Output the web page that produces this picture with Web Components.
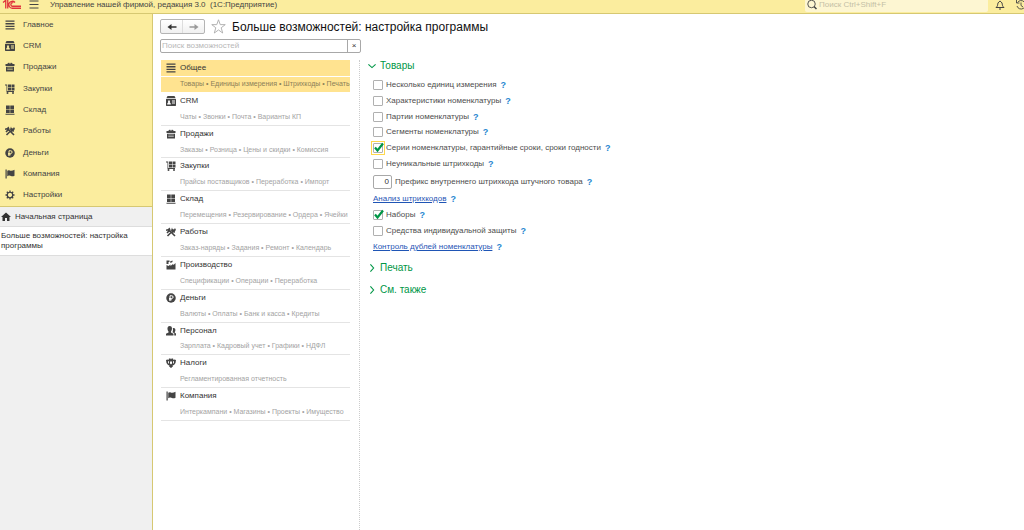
<!DOCTYPE html>
<html lang="ru">
<head>
<meta charset="utf-8">
<title>Управление нашей фирмой</title>
<style>
  html, body { margin: 0; height: 100%; overflow: hidden; }
  body { font: 8px/10px "Liberation Sans", Arial, sans-serif; color: #444; background: #fff; }
</style>
</head>
<body>
<app-shell></app-shell>
<script>
const ICONS = {
  bars: '<path d="M1 1h18v2.600H1zM1 6.200h18v2.600H1zM1 11.400h18V14H1zM1 16.600h18v2.600H1z"/>',
  crm: '<path d="M3 0h14l2 4H1z"/><path d="M1 5.500h18l1 1V19l-1 1H1l-1-1V6.500zM6 8.500c-2 0-2.500 2-1.500 4L2.500 15v2h7v-2l-2-2.500c1-2 .5-4-1.500-4zM12 9v2h6V9zM12 13v2h6v-2z" fill-rule="evenodd"/>',
  basket: '<path d="M4 4l4-3 2 3 2-3 4 3h3v4H1V4zM2 9.500h16V19H2zM4.500 11.500v1h11v-1zM4.500 15v1h11v-1z" fill-rule="evenodd"/>',
  cart: '<path d="M0 1h4.500v13H18v2H3V3H0zM6 1h6v5.500H6zM13 1h6v5.500h-6zM6 7.500h6V13H6zM13 7.500h6V13h-6z"/><circle cx="5" cy="18" r="2"/><circle cx="16" cy="18" r="2"/>',
  store: '<path d="M2 1h7.500v7H2zM10.500 1H18v7h-7.500zM2 9h7.500v7H2zM10.500 9H18v7h-7.500zM1 17.500h18v2H1z"/>',
  tools: '<path d="m3 18 8-8M6 6l12 12M2 12l4-4M12 9l6 1" fill="none" stroke="currentColor" stroke-width="3.200"/><path d="m0 5 4-1 3-3 2 4-1 4-4 1-1-3-3 1zM12 1l1 3 3 1 2-3 2 4-4 4-4 1-2-4z"/>',
  ruble: '<circle cx="10" cy="10" r="9.500"/><path d="M8 16V5.500h3.500a2.700 2.700 0 0 1 0 5.400H6M6 13.500h5.500" fill="none" stroke="var(--hole,#fff)" stroke-width="2"/>',
  flag: '<path d="M1 1h2.400v18H1zM4.500 3.500c4-3 5 1 8 0 2 0 4-1 6.500-2v12c-5 3-7-.5-10-.5-2 0-3 1-4.500 1.500z"/>',
  gear: '<circle cx="10" cy="10" r="5.500" fill="none" stroke="currentColor" stroke-width="2.400"/><path d="M10 1v4M10 15v4M1 10h4M15 10h4M3.600 3.600l3 3M13.400 13.400l3 3M3.600 16.400l3-3M13.400 6.600l3-3" stroke="currentColor" stroke-width="2.600"/>',
  home: '<path d="M10 1 20 10h-3v8h-5v-6H8v6H3v-8H0z"/>',
  factory: '<path d="M1 19v-9l4 2 4-3v3l5-4 1 2 4-4v13zM1 1h6v3H5v4H1zM8 3l5-2v3L9 6z"/>',
  people: '<path d="M7.500 0C13 0 13 7 10 11v2l5 2.500V19H0v-3.500L5 13v-2C2 7 2 0 7.500 0zM15 4c4 0 5 5 2.500 8v1.500L20 15v4h-3.500v-4.500L13 12.500C14 10 14.500 7 13.500 4.500z"/>',
  eagle: '<path d="M6 1h3l1 2 1-2h3l1 3 2-1 3 1-1 6-3 4-3 1 1 2-2 1-1 2-1-1-1 1-1-2-2-1 1-2-3-1-3-4-1-6 3-1 2 1zM8 7v4l2 2 2-2V7zM4 6v3l2 3V7zM16 6l-2 1v5l2-3z" fill-rule="evenodd"/>',
  menu: '<path d="M1 2h18M1 9h18M1 16h18" stroke="currentColor" stroke-width="2"/>',
  search: '<g fill="none" stroke="currentColor"><circle cx="9" cy="8" r="7.500" stroke-width="1.800"/><path d="m14 13 5 5" stroke-width="3"/></g>',
  bell: '<path d="M2 15c4-3 3-6 4-9 1-2 2-2 4-4 2 2 3 2 4 4 1 3 0 6 4 9zM8 18h4" fill="none" stroke="currentColor" stroke-width="2"/>',
  history: '<path d="M3 5a8.500 8.500 0 1 1-1 7M1 0v6h6M10 5v6l4 3" fill="none" stroke="currentColor" stroke-width="1.800"/>',
  left: '<path d="M19 10H5" stroke="currentColor" stroke-width="3"/><path d="m1 10 8-6v12z"/>',
  right: '<path d="M1 10h14" stroke="currentColor" stroke-width="3"/><path d="m19 10-8-6v12z"/>',
  star: '<path d="m10 1 2.300 6.500H19l-5.400 4.200 2 7L10 14.600l-5.600 4.100 2-7L1 7.500h6.700z" fill="none" stroke="currentColor" stroke-width="1.200"/>',
  down: '<path d="m1 6 9 8 9-8" fill="none" stroke="currentColor" stroke-width="2.800"/>',
  next: '<path d="m6 1 8 9-8 9" fill="none" stroke="currentColor" stroke-width="2.800"/>',
  check: '<path d="m4 9 5 6L20 1" fill="none" stroke="currentColor" stroke-width="4.400"/>',
  logo: '<g fill="none" stroke="currentColor" stroke-width="2.600"><path d="M0 5 5 1M5.500 0v17M9.500 0v17M24 5a7 7 0 1 0-5 11.500h17M20.500 5.500A3.600 3.600 0 1 0 19 12.500h17"/></g>'
};

function define(name, html, setup) {
  customElements.define(name, class extends HTMLElement {
    constructor() {
      super();
      const root = this.attachShadow({ mode: 'open' });
      const template = document.createElement('template');
      template.innerHTML = '<style>*{box-sizing:border-box}:host([hidden]){display:none}</style>' + html;
      root.append(template.content.cloneNode(true));
    }
    connectedCallback() { if (setup) setup(this, this.shadowRoot); }
  });
}

define('ui-icon', `
<style>
  :host { display: block; width: 10px; height: 10px; flex: none; }
  svg { display: block; width: 100%; height: 100%; fill: currentColor; overflow: visible; }
</style>
<svg viewBox="0 0 20 20" aria-hidden="true"></svg>`, (el, root) => {
  const svg = root.querySelector('svg');
  const name = el.getAttribute('name');
  if (name === 'logo') svg.setAttribute('viewBox', '0 0 36 18');
  if (name) svg.innerHTML = ICONS[name];
});

define('help-button', `
<style>
  :host { display: block; }
  button { display: block; border: 0; padding: 0; background: none; color: #1f86d0; font: inherit; font-size: 9px; line-height: 10px; font-weight: bold; }
</style>
<button aria-label="Справка">?</button>`);

define('app-header', `
<style>
  :host { display: flex; align-items: flex-start; height: 14px; padding: 0 0 0 3px; overflow: hidden;
          background: #fbed9e; border-bottom: 1px solid #d6c872; color: #444; }
  .logo { width: 18px; height: 9px; color: #e0343c; }
  button { border: 0; padding: 0; background: none; color: inherit; margin-left: 8px; }
  .title { margin-left: 11px; line-height: 9px; flex: 1; white-space: nowrap; }
  .search { display: flex; align-items: flex-start; width: 183px; height: 12px; padding-left: 2px; gap: 2px;
            background: #fdf6d2; border-radius: 0 0 2px 2px; }
  input { flex: 1; min-width: 0; height: 9px; border: 0; padding: 0; background: none; font: inherit; line-height: 9px; outline: 0; }
  input::placeholder { color: #c4bfa6; opacity: 1; }
  .search + button { margin-left: 7px; }
  .last { margin-left: 11px; margin-right: -2px; }
</style>
<ui-icon class="logo" name="logo"></ui-icon>
<button aria-label="Меню"><ui-icon name="menu"></ui-icon></button>
<span class="title"><slot></slot></span>
<label class="search"><ui-icon name="search"></ui-icon><input type="search" placeholder="Поиск Ctrl+Shift+F" aria-label="Поиск"></label>
<button aria-label="Уведомления"><ui-icon name="bell"></ui-icon></button>
<button class="last" aria-label="История"><ui-icon name="history"></ui-icon></button>`);

define('nav-item', `
<style>
  :host { display: flex; align-items: center; --hole: #fbed9e; }
  a { display: flex; align-items: center; gap: 8px; padding-left: 5px; color: inherit; text-decoration: none; }
</style>
<a href="#"><ui-icon></ui-icon><slot></slot></a>`, (el, root) => {
  root.querySelector('ui-icon').shadowRoot.querySelector('svg').innerHTML = ICONS[el.getAttribute('icon')];
});

define('side-panel', `
<style>
  :host { display: flex; flex-direction: column; background: #f0f0f0; border-right: 1px solid #d6c872; }
  nav { display: grid; grid-auto-rows: 1fr; height: 193px; background: #fbed9e; border-bottom: 1px solid #d6c872; }
  .tab { display: flex; align-items: center; color: #333; text-decoration: none; }
  .home { height: 20px; gap: 4px; padding-left: 1px; border-bottom: 1px solid #ddd; }
  .open { height: 29px; padding: 0 16px 0 1px; background: #fff; border-bottom: 1px solid #ddd; }
</style>
<nav><slot></slot></nav>
<a class="tab home" href="#"><ui-icon name="home"></ui-icon>Начальная страница</a>
<a class="tab open" href="#">Больше возможностей: настройка программы</a>`);

define('feature-item', `
<style>
  :host { display: grid; grid-template-rows: 16px 1fr; border-bottom: 1px solid #e4e4e4; color: #333; }
  a { display: flex; align-items: center; gap: 4px; padding-left: 5px; color: inherit; text-decoration: none; }
  ui-icon { color: #444; }
  .hint { display: flex; align-items: center; padding-left: 19px; color: #a3a3a3; font-size: 7px; white-space: nowrap; }
  :host([selected]) { row-gap: 1px; border-bottom-color: #fff; --hole: #ffe390; }
  :host([selected]) a, :host([selected]) .hint { background: #ffe390; }
  :host([selected]) .hint { color: #8c7f58; }
</style>
<a href="#"><ui-icon></ui-icon><slot></slot></a>
<div class="hint"></div>`, (el, root) => {
  root.querySelector('ui-icon').shadowRoot.querySelector('svg').innerHTML = ICONS[el.getAttribute('icon')];
  root.querySelector('.hint').textContent = el.getAttribute('hint');
});

define('option-row', `
<style>
  :host { display: flex; align-items: center; gap: 4px; color: #4d4d4d; white-space: nowrap; }
  label { display: flex; align-items: center; gap: 3px; }
  .box { display: grid; place-items: center; width: 10px; height: 10px; }
  .box > * { grid-area: 1 / 1; }
  input { appearance: none; margin: 0; width: 10px; height: 10px; border: 1px solid #b0b0b0; border-radius: 1px; background: #fff; outline: 0; }
  ui-icon { display: none; color: #009646; pointer-events: none; }
  input:checked + ui-icon { display: block; }
  :host([current]) .box { outline: 1px solid #ffd84d; outline-offset: 1px; }
</style>
<label><span class="box"><input type="checkbox"><ui-icon name="check"></ui-icon></span><slot></slot></label>
<help-button></help-button>`, (el, root) => {
  root.querySelector('input').checked = el.hasAttribute('checked');
});

define('prefix-row', `
<style>
  :host { display: flex; align-items: center; gap: 4px; color: #4d4d4d; white-space: nowrap; }
  label { display: flex; align-items: center; gap: 3px; }
  input { width: 19px; height: 14px; border: 1px solid #a8a8a8; border-radius: 2px; padding: 0 2px; font: inherit; color: #333; text-align: right; }
</style>
<label><input type="text" value="0"><slot></slot></label>
<help-button></help-button>`);

define('link-row', `
<style>
  :host { display: flex; align-items: center; gap: 4px; white-space: nowrap; }
  a { color: #1f55b5; text-decoration: underline; }
</style>
<a href="#"><slot></slot></a>
<help-button></help-button>`);

define('section-title', `
<style>
  :host { display: block; }
  button { display: flex; align-items: center; gap: 4px; border: 0; padding: 0; background: none; color: #009646; font: inherit; font-size: 10px; line-height: 12px; }
  ui-icon { width: 8px; height: 8px; }
</style>
<button><ui-icon></ui-icon><slot></slot></button>`, (el, root) => {
  root.querySelector('ui-icon').shadowRoot.querySelector('svg').innerHTML = ICONS[el.hasAttribute('open') ? 'down' : 'next'];
});

define('page-toolbar', `
<style>
  :host { display: grid; gap: 5px; }
  .row { display: flex; align-items: center; }
  .history { display: flex; width: 45px; height: 15px; border: 1px solid #b4b4b4; border-radius: 2px; background: linear-gradient(#fff, #f0f0f0); }
  button { display: grid; place-items: center; flex: 1; border: 0; padding: 0; background: none; color: #333; font: inherit; }
  .history button + button { border-left: 1px solid #ddd; color: #999; }
  .star { flex: none; margin: 0 6px; color: #aaa; }
  .star ui-icon { width: 15px; height: 15px; }
  h1 { margin: 0; font-size: 12px; line-height: 14px; font-weight: normal; color: #111; }
  .find { display: flex; width: 201px; height: 14px; border: 1px solid #a8a8a8; border-radius: 2px; }
  .find input { flex: 1; min-width: 0; border: 0; padding: 0 1px; background: none; font: inherit; outline: 0; }
  .find input::placeholder { color: #b8b8b8; opacity: 1; }
  .find button { flex: none; width: 13px; border-left: 1px solid #a8a8a8; }
</style>
<div class="row">
  <div class="history"><button aria-label="Назад"><ui-icon name="left"></ui-icon></button><button aria-label="Вперед"><ui-icon name="right"></ui-icon></button></div>
  <button class="star" aria-label="В избранное"><ui-icon name="star"></ui-icon></button>
  <h1><slot></slot></h1>
</div>
<div class="find"><input type="text" placeholder="Поиск возможностей" aria-label="Поиск возможностей"><button aria-label="Очистить">×</button></div>`);

define('settings-page', `
<style>
  :host { display: flex; flex-direction: column; padding: 5px 0 0 8px; min-width: 0; }
  page-toolbar { margin-left: -1px; }
  .body { display: grid; grid-template-columns: 199px 1fr; flex: 1; margin-top: 7px; }
  .features { border-right: 1px dotted #ccc; padding-right: 9px; }
  .list { display: grid; grid-auto-rows: 1fr; height: 361px; }
  .options { padding-left: 8px; }
  .group { display: grid; grid-auto-rows: 1fr; height: 95px; margin: 5px 0 0 5px; }
  .links { height: 64px; margin-top: 0; }
  prefix-row { height: 19px; margin-left: 5px; }
  section-title + section-title { margin-top: 10px; }
  .links + section-title { margin-top: 7px; }
</style>
<page-toolbar>Больше возможностей: настройка программы</page-toolbar>
<div class="body">
  <div class="features"><div class="list">
    <feature-item selected icon="bars" hint="Товары • Единицы измерения • Штрихкоды • Печать">Общее</feature-item>
    <feature-item icon="crm" hint="Чаты • Звонки • Почта • Варианты КП">CRM</feature-item>
    <feature-item icon="basket" hint="Заказы • Розница • Цены и скидки • Комиссия">Продажи</feature-item>
    <feature-item icon="cart" hint="Прайсы поставщиков • Переработка • Импорт">Закупки</feature-item>
    <feature-item icon="store" hint="Перемещения • Резервирование • Ордера • Ячейки">Склад</feature-item>
    <feature-item icon="tools" hint="Заказ-наряды • Задания • Ремонт • Календарь">Работы</feature-item>
    <feature-item icon="factory" hint="Спецификации • Операции • Переработка">Производство</feature-item>
    <feature-item icon="ruble" hint="Валюты • Оплаты • Банк и касса • Кредиты">Деньги</feature-item>
    <feature-item icon="people" hint="Зарплата • Кадровый учет • Графики • НДФЛ">Персонал</feature-item>
    <feature-item icon="eagle" hint="Регламентированная отчетность">Налоги</feature-item>
    <feature-item icon="flag" hint="Интеркампани • Магазины • Проекты • Имущество">Компания</feature-item>
  </div></div>
  <div class="options">
    <section-title open>Товары</section-title>
    <div class="group">
      <option-row>Несколько единиц измерения</option-row>
      <option-row>Характеристики номенклатуры</option-row>
      <option-row>Партии номенклатуры</option-row>
      <option-row>Сегменты номенклатуры</option-row>
      <option-row checked current>Серии номенклатуры, гарантийные сроки, сроки годности</option-row>
      <option-row>Неуникальные штрихкоды</option-row>
    </div>
    <prefix-row>Префикс внутреннего штрихкода штучного товара</prefix-row>
    <div class="group links">
      <link-row>Анализ штрихкодов</link-row>
      <option-row checked>Наборы</option-row>
      <option-row>Средства индивидуальной защиты</option-row>
      <link-row>Контроль дублей номенклатуры</link-row>
    </div>
    <section-title>Печать</section-title>
    <section-title>См. также</section-title>
  </div>
</div>`);

define('app-shell', `
<style>
  :host { display: grid; grid-template: auto 1fr / 153px 1fr; min-height: 100vh; }
  app-header { grid-column: 1 / -1; }
</style>
<app-header>Управление нашей фирмой, редакция 3.0&nbsp; (1С:Предприятие)</app-header>
<side-panel>
  <nav-item icon="bars">Главное</nav-item>
  <nav-item icon="crm">CRM</nav-item>
  <nav-item icon="basket">Продажи</nav-item>
  <nav-item icon="cart">Закупки</nav-item>
  <nav-item icon="store">Склад</nav-item>
  <nav-item icon="tools">Работы</nav-item>
  <nav-item icon="ruble">Деньги</nav-item>
  <nav-item icon="flag">Компания</nav-item>
  <nav-item icon="gear">Настройки</nav-item>
</side-panel>
<settings-page></settings-page>`);
</script>
</body>
</html>
